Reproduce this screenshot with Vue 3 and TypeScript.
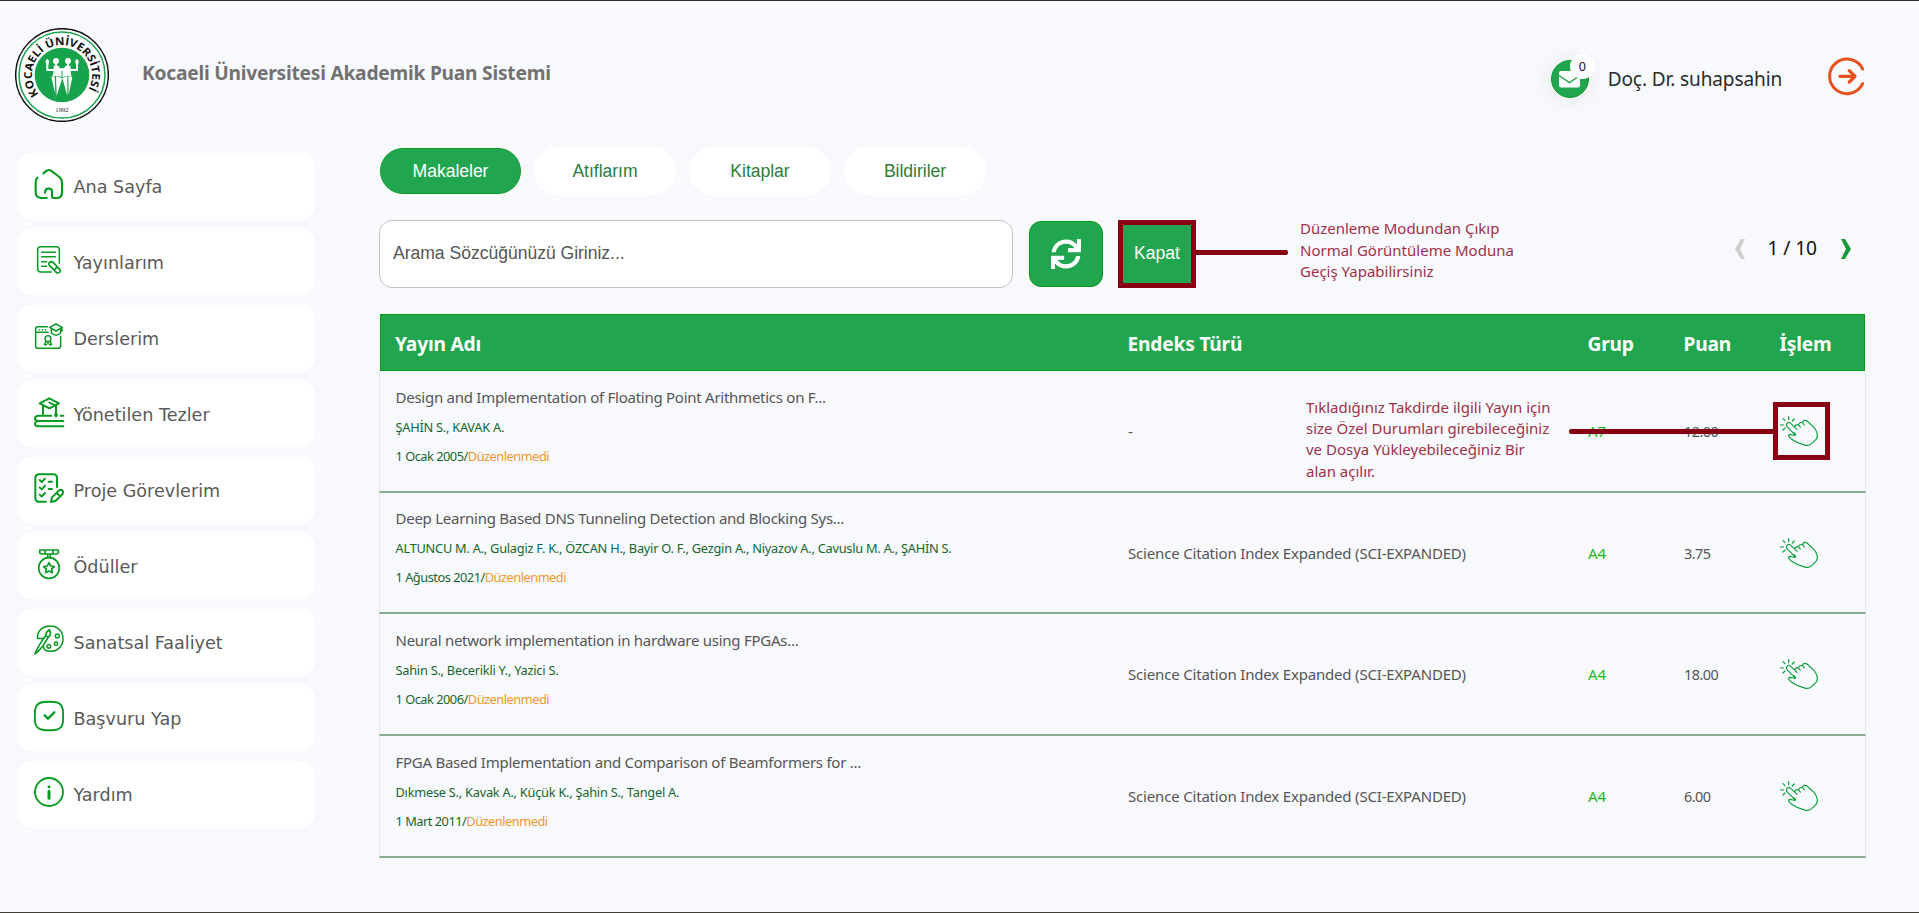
<script setup lang="ts">
interface Shape { d: string; w: number; fill?: boolean }
interface MenuItem { label: string; shapes: Shape[] }
interface Publication {
  title: string
  authors: string
  date: string
  index: string
  group: string
  score: string
}

const menu: MenuItem[] = [
  { label: 'Ana Sayfa', shapes: [
    { w: 6.5, d: 'M10 26 Q5 31 5 40 V70 Q5 87 22 87 H38' },
    { w: 6.5, d: 'M28 13 L38 5 Q44 1 51 5 L76 24 Q84 30 84 41 V70 Q84 87 70 87 H58 Q54 87 54 83 V68 Q54 60 46 59 H42 Q33 60 33 71' },
  ] },
  { label: 'Yayınlarım', shapes: [
    { w: 4.5, d: 'M76 55 V14 Q76 5 67 5 H20 Q11 5 11 14 V72 Q11 81 20 81 H52 M23 22 H64 M23 35 H64 M23 50 H38 M23 64 H38' },
    { w: 5, d: 'M46 53 Q52 47 58 53 L77 73 Q81 79 77 82 Q71 86 67 82 L47 62 Q42 57 46 53 Z M68 67 L61 75' },
  ] },
  { label: 'Derslerim', shapes: [
    { w: 4.5, d: 'M40 17 H12 Q5 17 5 24 V75 Q5 82 12 82 H72 Q80 82 80 75 V46 M5 34 H42 M16 26 h1 M25 26 h1 M34 26 h1' },
    { w: 4.5, d: 'M66 9 L85 19 L66 30 L47 19 Z M52 24 V35 Q66 50 80 35 V24 M84 20 V30 M51 53 A9 9 0 1 1 33 53 A9 9 0 1 1 51 53 M36 61 L31 71 H38 M48 61 L53 71 H46 M40 66 H44' },
  ] },
  { label: 'Yönetilen Tezler', shapes: [
    { w: 6, d: 'M46 4 L75 19 L46 34 L17 19 Z M27 27 V54 M46 17 L66 26 V48' },
    { w: 6, d: 'M52 56 H12 Q3 57 3 64 Q3 71 12 72 H88 M12 72 Q3 73 3 80 Q3 87 12 88 H88 M80 56 H88' },
    { w: 4, fill: true, d: 'M66 45 L70 54 L66 60 L62 54 Z' },
  ] },
  { label: 'Proje Görevlerim', shapes: [
    { w: 6, d: 'M69 42 V16 Q69 4 58 4 H15 Q4 4 4 16 V74 Q4 86 15 86 H36' },
    { w: 6, d: 'M17 21 L23 27 L33 17 M17 43 L23 49 L33 38 M17 65 L23 71 L33 60 M44 26 H54 M44 48 H54' },
    { w: 6, d: 'M51 87 L54 73 L75 52 Q81 48 86 53 Q89 58 86 63 L65 83 Z M68 60 L78 69' },
  ] },
  { label: 'Ödüller', shapes: [
    { w: 5, d: 'M76 57 A31 31 0 1 1 14 57 A31 31 0 1 1 76 57 M17 3 H73 V11 Q72 15 68 15 H22 Q17 14 17 10 Z M33 3 V15 M57 3 V15 M41 15 V25 M49 15 V25' },
    { w: 5, d: 'M45 41 L50 51 L61 53 L53 60 L55 71 L45 66 L35 71 L37 60 L29 53 L40 51 Z' },
  ] },
  { label: 'Sanatsal Faaliyet', shapes: [
    { w: 4.5, d: 'M27 40 Q16 42 10 39 C10 14 30 3 48 3 C74 3 87 22 87 41 C87 64 70 79 50 79 C38 79 29 75 28 64' },
    { w: 5, d: 'M46 14 Q36 20 35 32 L25 46 Q8 72 3 87 Q14 80 26 64 L43 36 Q54 30 46 14 Z M35 32 L43 37' },
    { w: 4.5, d: 'M76 33 a6 6 0 1 1 -12 0 a6 6 0 1 1 12 0 M71 56 a5 5 0 1 1 -10 0 a5 5 0 1 1 10 0 M50 64 a5.5 5.5 0 1 1 -11 0 a5.5 5.5 0 1 1 11 0' },
  ] },
  { label: 'Başvuru Yap', shapes: [
    { w: 5.5, d: 'M29 3 Q45 1.500 61 3 Q84 4 87 28 Q88 45 87 62 Q85 86 61 87 Q45 88.500 29 87 Q5 85 3 62 Q2 45 3 28 Q5 5 29 3 Z' },
    { w: 7, d: 'M32 43 L42 53 L61 34' },
  ] },
  { label: 'Yardım', shapes: [
    { w: 5.5, d: 'M87 45 A42 42 0 1 1 3 45 A42 42 0 1 1 87 45 Z' },
    { w: 9, d: 'M45 43 V64 M45 29 V29.100' },
  ] },
]

const tabs: string[] = ['Makaleler', 'Atıflarım', 'Kitaplar', 'Bildiriler']

const sci = 'Science Citation Index Expanded (SCI-EXPANDED)'
const publications: Publication[] = [
  { title: 'Design and Implementation of Floating Point Arithmetics on F...', authors: 'ŞAHİN S., KAVAK A.', date: '1 Ocak 2005', index: '-', group: 'A7', score: '12.00' },
  { title: 'Deep Learning Based DNS Tunneling Detection and Blocking Sys...', authors: 'ALTUNCU M. A., Gulagiz F. K., ÖZCAN H., Bayir O. F., Gezgin A., Niyazov A., Cavuslu M. A., ŞAHİN S.', date: '1 Ağustos 2021', index: sci, group: 'A4', score: '3.75' },
  { title: 'Neural network implementation in hardware using FPGAs...', authors: 'Sahin S., Becerikli Y., Yazici S.', date: '1 Ocak 2006', index: sci, group: 'A4', score: '18.00' },
  { title: 'FPGA Based Implementation and Comparison of Beamformers for ...', authors: 'Dıkmese S., Kavak A., Küçük K., Şahin S., Tangel A.', date: '1 Mart 2011', index: sci, group: 'A4', score: '6.00' },
]
</script>

<template>
  <div class="page">
    <header class="header">
      <svg class="logo" viewBox="45 82 282 282">
        <defs>
          <path id="ringText" d="M 117 281 A 90 90 0 1 1 255 281" />
        </defs>
        <circle cx="186" cy="223" r="139" fill="#fff" stroke="#111" stroke-width="4.500" />
        <circle cx="186" cy="223" r="129" fill="none" stroke="#16a34c" stroke-width="4.500" />
        <circle cx="186" cy="223" r="82" fill="#16a34c" />
        <text class="logo-text"><textPath href="#ringText" textLength="390" lengthAdjust="spacingAndGlyphs">KOCAELİ ÜNİVERSİTESİ</textPath></text>
        <text class="logo-year" x="186" y="335" text-anchor="middle">1992</text>
        <g fill="#fff">
          <circle cx="168" cy="181" r="9" />
          <circle cx="204" cy="181" r="9" />
          <path d="M161 195 H175 L180 203 H192 L197 195 H211 L213 222 L216 228 Q201 222 187 230 Q171 222 155 228 L160 220 Z" />
          <path d="M154 230 L164 226 L166 280 Z M168 226 L187 232 L170 285 Z M187 232 L202 226 L202 285 Z M205 226 L217 230 L206 282 Z" />
          <path d="M136 182 L142 174 L148 182 L144 194 H140 Z M225 182 L231 174 L237 182 L233 194 H229 Z" />
        </g>
        <path d="M142 186 V208 H166 M231 186 V208 H206 M168 186 V200 M204 186 V200" fill="none" stroke="#fff" stroke-width="6" />
        <path d="M186 211 V232" stroke="#16a34c" stroke-width="3" />
      </svg>
      <h1 class="title">Kocaeli Üniversitesi Akademik Puan Sistemi</h1>
      <div class="user">
        <div class="mail">
          <svg viewBox="0 0 38 38">
            <circle cx="19" cy="19" r="18.500" fill="#21a54e" stroke="#0f9a25" />
            <rect x="8" y="11" width="21" height="16.500" rx="2" fill="#fff" />
            <path d="M8 15.500 L18.500 22.500 L29 15.500" fill="none" stroke="#21a54e" stroke-width="1.500" />
          </svg>
          <span class="badge">0</span>
        </div>
        <span class="name">Doç. Dr. suhapsahin</span>
        <svg class="logout" viewBox="924 80 112 116">
          <g fill="none" stroke="#e7511f" stroke-linecap="round" stroke-linejoin="round">
            <path d="M1028 116 A52 52 0 1 0 1028 160" stroke-width="9" />
            <path d="M960 138 H1004 M988 121 L1005 138 L988 155" stroke-width="10" />
          </g>
        </svg>
      </div>
    </header>

    <div class="body">
      <nav class="sidebar">
        <a v-for="item in menu" :key="item.label" class="menu-item">
          <svg class="menu-icon" viewBox="0 0 90 90">
            <path
              v-for="(s, i) in item.shapes" :key="i" :d="s.d" :stroke-width="s.w"
              :fill="s.fill ? '#079a22' : 'none'"
            />
          </svg>
          <span>{{ item.label }}</span>
        </a>
      </nav>

      <main class="main">
        <div class="tabs">
          <button v-for="(tab, i) in tabs" :key="tab" class="tab" :class="{ active: i === 0 }">{{ tab }}</button>
        </div>

        <div class="toolbar">
          <input class="search" type="text" placeholder="Arama Sözcüğünüzü Giriniz...">
          <button class="refresh">
            <svg viewBox="0 0 512 512"><path fill="#fff" d="M440.650 12.570l4 82.770A247.160 247.160 0 0 0 255.830 8C134.730 8 33.910 94.920 12.290 209.820A12 12 0 0 0 24.090 224h49.050a12 12 0 0 0 11.670-9.260 175.910 175.910 0 0 1 317-56.940l-101.460-4.860a12 12 0 0 0-12.570 12v47.410a12 12 0 0 0 12 12H500a12 12 0 0 0 12-12V12a12 12 0 0 0-12-12h-47.370a12 12 0 0 0-11.980 12.570zM255.830 432a175.610 175.610 0 0 1-146-77.800l101.800 4.870a12 12 0 0 0 12.570-12v-47.400a12 12 0 0 0-12-12H12a12 12 0 0 0-12 12V500a12 12 0 0 0 12 12h47.350a12 12 0 0 0 12-12.600l-4.150-82.570A247.170 247.170 0 0 0 255.830 504c121.110 0 221.930-86.920 243.550-201.820a12 12 0 0 0-11.800-14.180h-49.050a12 12 0 0 0-11.670 9.260A175.860 175.860 0 0 1 255.830 432z" /></svg>
          </button>
          <button class="close">Kapat</button>
          <span class="close-line"></span>
          <p class="note">Düzenleme Modundan Çıkıp<br>Normal Görüntüleme Moduna<br>Geçiş Yapabilirsiniz</p>
          <div class="pager">
            <svg viewBox="0 0 10 20"><path fill="#cfcfcf" d="M6 0 H10 L5 10 L10 20 H6 L0 10 Z" /></svg>
            <span>1 / 10</span>
            <svg viewBox="0 0 10 20"><path fill="#149a36" d="M4 0 H0 L5 10 L0 20 H4 L10 10 Z" /></svg>
          </div>
        </div>

        <section class="table">
          <div class="grid head">
            <span>Yayın Adı</span><span>Endeks Türü</span><span>Grup</span><span>Puan</span><span>İşlem</span>
          </div>
          <div v-for="(p, i) in publications" :key="p.title" class="grid row">
            <div class="pub">
              <div class="pub-title">{{ p.title }}</div>
              <div class="pub-authors">{{ p.authors }}</div>
              <div class="pub-date">{{ p.date }}/<span class="pending">Düzenlenmedi</span></div>
            </div>
            <span class="index">{{ p.index }}</span>
            <span class="group">{{ p.group }}</span>
            <span class="score">{{ p.score }}</span>
            <svg class="hand" viewBox="45 64 115 92">
              <g fill="none" stroke="#0c9f3c" stroke-width="3.600" stroke-linecap="round" stroke-linejoin="round">
                <path d="M71 66 V75 M54 72 L60 78 M88 73 L82 79 M46 91 H56 M60 100 L54 106" />
                <path d="M89 119 L66 96 Q62 88 68 84 Q73 81 78 87 L96 104 M89 97 Q92 87 101 91 L106 97 M100 91 Q104 80 114 85 L118 91 M112 84 Q116 73 126 79 L147 98 Q155 107 157 119 Q158 128 153 134 L141 146 Q132 154 122 152 Q98 147 80 134 L72 126 Q69 120 76 119 L84 121 Q92 124 92 119 L87 114" />
              </g>
            </svg>
            <template v-if="i === 0">
              <span class="row-line"></span>
              <span class="row-frame"></span>
              <p class="note row-note">Tıkladığınız Takdirde ilgili Yayın için<br>size Özel Durumları girebileceğiniz<br>ve Dosya Yükleyebileceğiniz Bir<br>alan açılır.</p>
            </template>
          </div>
        </section>
      </main>
    </div>
  </div>
</template>

<style>
body { background: #f8f9fd; }
</style>

<style scoped>
* { box-sizing: border-box; }
.page {
  width: 1919px;
  height: 913px;
  overflow: hidden;
  background: #f8f9fd;
  border-top: 1px solid #2e2e26;
  border-bottom: 1px solid #3f3d36;
  font-family: "Noto Sans", "Open Sans", sans-serif;
}
button, input { font-family: "Liberation Sans", Arial, sans-serif; font-size: 17.6px; letter-spacing: -0.04px; }
button { padding: 0; border: 0; }

.header { display: flex; align-items: flex-start; height: 146px; padding: 26px 54px 0 15px; }
.logo { width: 94px; height: 94px; margin-top: 0.500px; flex: none; }
.logo-text { font: bold 33px "Open Sans", "Noto Sans", sans-serif; fill: #111; }
.logo-year { font: 20px "Liberation Serif", serif; fill: #222; }
.title {
  margin: 31px 0 0 33px;
  font-size: 19.2px;
  line-height: 30px;
  font-weight: 700;
  letter-spacing: -0.23px;
  color: #727272;
}
.user { display: flex; align-items: center; margin-left: auto; padding-top: 29px; }
.mail { position: relative; width: 38px; height: 38px; margin-top: 4px; border-radius: 50%; box-shadow: 0 0 22px rgba(0, 0, 0, 0.09); }
.mail svg { display: block; width: 38px; height: 38px; }
.badge {
  position: absolute;
  left: 19px;
  top: -6px;
  width: 25px;
  height: 25px;
  border-radius: 50%;
  background: #fff;
  color: #111;
  font-size: 12.5px;
  line-height: 25px;
  text-align: center;
}
.name { margin: 3px 0 0 19px; width: 174px; font-size: 19px; line-height: 28px; letter-spacing: -0.1px; color: #2b2b2b; white-space: nowrap; }
.logout { width: 37.3px; height: 38.7px; margin-left: 46px; margin-top: -1px; }

.body { display: flex; align-items: flex-start; }
.sidebar { display: flex; flex-direction: column; gap: 10px; width: 297px; margin: 6px 64px 0 18px; flex: none; }
.menu-item {
  display: flex;
  align-items: center;
  gap: 9.500px;
  height: 66px;
  padding: 2px 0 0 16px;
  border-radius: 14px;
  background: #fff;
  font: 17.6px "DejaVu Sans", Verdana, sans-serif;
  color: #595959;
}
.menu-icon { width: 30px; height: 30px; margin-bottom: 7px; overflow: visible; stroke: #079a22; stroke-linecap: round; stroke-linejoin: round; }

.main { width: 1487px; flex: none; }
.tabs { display: flex; align-items: center; gap: 13px; height: 48px; margin-left: 1px; }
.tab { width: 142px; height: 48px; border-radius: 24px; background: #fff; color: #2f7d3a; }
.tab.active { width: 141px; height: 46px; border: 1px solid #0f9a25; background: #21a54e; color: #fff; }

.toolbar { position: relative; display: flex; align-items: flex-start; height: 68px; margin-top: 25px; }
.search {
  width: 634px;
  height: 68px;
  padding: 0 13px 2px;
  border: 1px solid #c4c4c4;
  border-radius: 13px;
  background: #fff;
  outline: none;
}
.search::placeholder { color: #555; opacity: 1; }
.refresh {
  display: grid;
  place-items: center;
  width: 74px;
  height: 66px;
  margin: 1px 15px 0 16px;
  border: 1px solid #0f9a14;
  border-radius: 12px;
  background: #21a54e;
}
.refresh svg { width: 30px; height: 30px; }
.close { width: 78px; height: 68px; padding-bottom: 2px; border: 5px solid #870014; background: #21a54e; color: #fff; }
.close-line { width: 92px; height: 5px; margin-top: 30px; border-radius: 0 2px 2px 0; background: #870014; }
.note { margin: -2px 0 0 12px; font-size: 15px; line-height: 21.500px; color: #a03048; white-space: nowrap; }
.pager { display: flex; align-items: center; margin: 14px 15px 0 auto; font-size: 19.2px; line-height: 28px; color: #111; }
.pager svg { width: 10px; height: 20px; margin-top: 2px; }
.pager span { width: 50px; margin: 0 23.500px 0 22.500px; letter-spacing: -0.1px; white-space: nowrap; }

.table { margin-top: 26px; }
.grid { display: grid; grid-template-columns: 732.500px 460px 96px 96px 1fr; align-items: center; padding-left: 15.500px; }
.head {
  height: 57px;
  margin: 0 1px;
  border: 1px solid #0b9a10;
  background: #21a54e;
  color: #fff;
  font-size: 19.2px;
  font-weight: 700;
  letter-spacing: -0.2px;
  padding-top: 2px;
  padding-left: 14px;
}
.row {
  position: relative;
  height: 121.700px;
  border: 1px solid #e6e8ee;
  border-top: 0;
  border-bottom: 2px solid #86ad8d;
  font-size: 14.400px;
  color: #555;
}
.pub { align-self: start; padding-top: 10.500px; white-space: nowrap; }
.pub-title { font-size: 15px; line-height: 30px; letter-spacing: -0.26px; }
.pub-authors { font-size: 12.800px; line-height: 30px; letter-spacing: -0.25px; color: #17652e; }
.pub-date { font-size: 12.800px; line-height: 29px; letter-spacing: -0.49px; color: #17652e; }
.pending { color: #f0962c; }
.index { font-size: 15px; letter-spacing: -0.18px; }
.group { font-size: 15px; color: #1db81d; }
.score { padding-top: 1px; letter-spacing: -0.5px; }
.hand { width: 38.300px; height: 30.700px; margin-top: 1px; }

/* Callout overlays on the first row */
.row-line { position: absolute; left: 1189px; top: 58px; width: 206px; height: 5px; border-radius: 2px 0 0 2px; background: #870014; }
.row-frame { position: absolute; left: 1393px; top: 31px; width: 57px; height: 58px; border: 5px solid #870014; }
.row-note { position: absolute; left: 926px; top: 26px; margin: 0; line-height: 21.200px; }
</style>
